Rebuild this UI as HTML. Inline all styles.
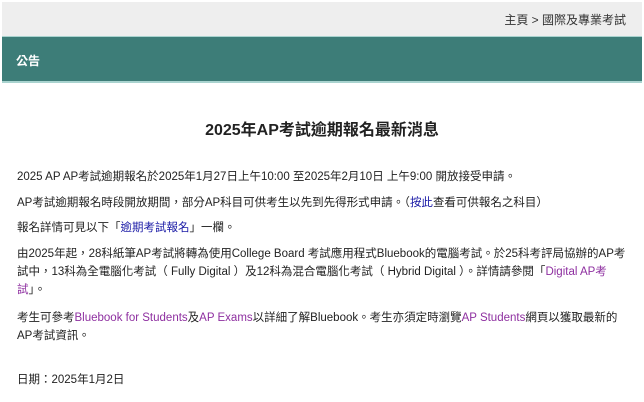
<!DOCTYPE html>
<html><head><meta charset="utf-8"><style>
body{margin:0;width:644px;height:402px;background:#fff;font-family:"Liberation Sans","Noto Sans CJK TC",sans-serif;color:#222;overflow:hidden;position:relative}
.top{position:absolute;left:2px;top:2px;width:640px;height:34px;background:#eeeeee;border-bottom:1px solid #a9d3cf}
.crumb{position:absolute;right:16px;top:9px;font-size:12px;color:#333}
.bar{position:absolute;left:2px;top:37px;width:640px;height:44px;background:#3d7d78;border-bottom:2px solid #a9d3cf}
.bar span{position:absolute;left:14px;top:15px;color:#fff;font-weight:bold;font-size:12px}
h1{position:absolute;left:0;width:644px;top:116px;margin:0;text-align:center;font-size:16px;font-weight:bold;color:#222}
p{position:absolute;left:17px;width:620px;margin:0;font-size:11.5px;line-height:18px;white-space:nowrap}
a{color:#1a1aa6;text-decoration:none}
a.v{color:#8e2fa0}
</style></head><body>
<div class="top"><div class="crumb">主頁 &gt; 國際及專業考試</div></div>
<div class="bar"><span>公告</span></div>
<h1>2025年AP考試逾期報名最新消息</h1>
<p style="top:168px">2025 AP AP考試逾期報名於2025年1月27日上午10:00 至2025年2月10日 上午9:00 開放接受申請。</p>
<p style="top:194px">AP考試逾期報名時段開放期間，部分AP科目可供考生以先到先得形式申請。（<a>按此</a>查看可供報名之科目）</p>
<p style="top:219px">報名詳情可見以下「<a>逾期考試報名</a>」一欄。</p>
<p style="top:245px">由2025年起，28科紙筆AP考試將轉為使用College Board 考試應用程式Bluebook的電腦考試。於25科考評局協辦的AP考<br>試中，13科為全電腦化考試（ Fully Digital ）及12科為混合電腦化考試（ Hybrid Digital ）。詳情請參閱「<a class="v">Digital AP考<br>試</a>」。</p>
<p style="top:309px">考生可參考<a class="v">Bluebook for Students</a>及<a class="v">AP Exams</a>以詳細了解Bluebook。考生亦須定時瀏覽<a class="v">AP Students</a>網頁以獲取最新的<br>AP考試資訊。</p>
<p style="top:371px">日期：2025年1月2日</p>
</body></html>
